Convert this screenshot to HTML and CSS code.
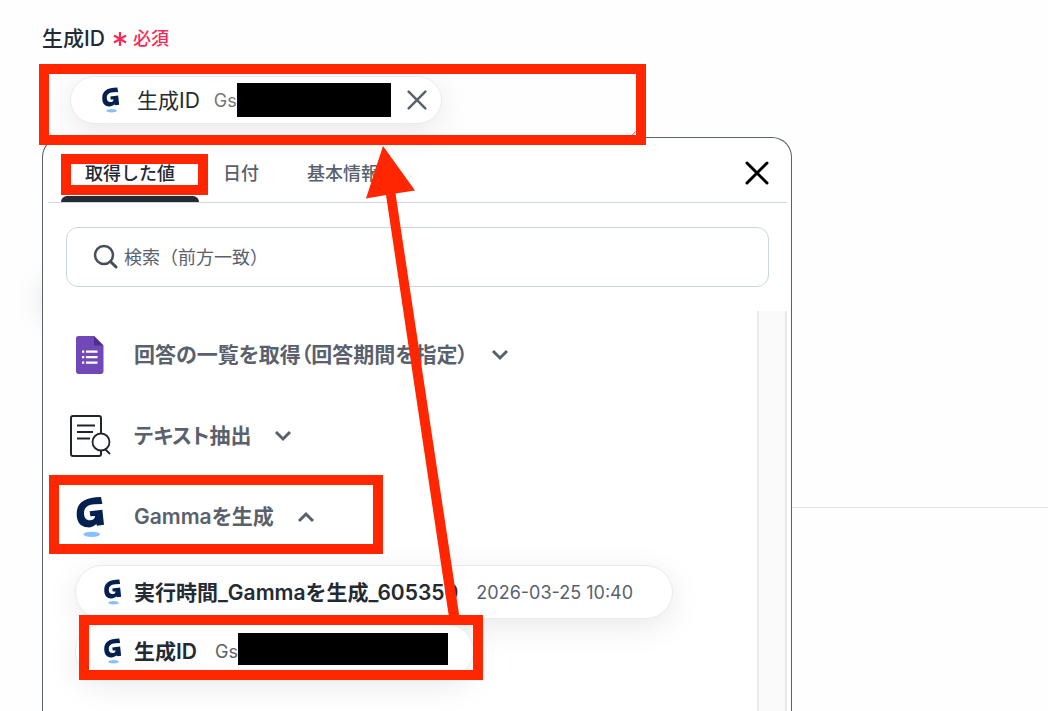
FILE: index.html
```html
<!DOCTYPE html>
<html lang="ja">
<head>
<meta charset="utf-8">
<title>生成ID</title>
<meta name="viewport" content="width=device-width, initial-scale=1">
<link rel="stylesheet" href="styles.css">
</head>
<body>
<svg class="defs" aria-hidden="true">
  <symbol id="gamma" viewBox="15 18 90 126">
    <path fill="#03204f" d="M93 21 97 42 74 43C52 45 42 53 42 70 42 84 49 91 59 91 68 91 75 86 75 78L61 79 59 64 97 59 102 104 81 107 79 102C71 110 61 113 52 112 31 110 20 96 20 72 20 38 42 22 93 21Z"/>
    <ellipse cx="65" cy="133" rx="25" ry="8" fill="#86c0ff"/>
  </symbol>
  <symbol id="cross" viewBox="0 0 24 24">
    <path d="M2 2 22 22M22 2 2 22" fill="none" stroke="currentColor" stroke-linecap="round"/>
  </symbol>
  <symbol id="chevron" viewBox="0 0 18 12">
    <path d="M2 2 9 9 16 2" fill="none" stroke="currentColor" stroke-width="3"/>
  </symbol>
</svg>
<main class="page">
  <div class="editor">
    <div class="label" id="field-label">
      <span class="label-name">生成ID</span>
      <svg class="asterisk" viewBox="0 0 14 14" aria-hidden="true"><path d="M7 0V14M1 3.500 13 10.500M13 3.500 1 10.500" fill="none" stroke="currentColor" stroke-width="2.200"/></svg>
      <span class="required">必須</span>
    </div>
    <div class="field" role="group" aria-labelledby="field-label">
      <div class="token token-field">
        <svg class="token-icon" aria-hidden="true"><use href="#gamma"/></svg>
        <span class="token-name">生成ID</span>
        <span class="token-value">Gs<span class="mask mask-field"></span></span>
        <button class="remove" type="button" aria-label="削除"><svg viewBox="0 0 24 24"><use href="#cross"/></svg></button>
      </div>
      <svg class="grip" viewBox="0 0 12 12" aria-hidden="true"><path d="M0 12 12 0M6 12 12 6" stroke="#9aa0a8"/></svg>
      <div class="mark mark-field"></div>
    </div>
    <section class="panel">
      <header class="panel-head">
        <nav class="tabs">
          <button class="tab tab-active" type="button">取得した値<span class="mark mark-tab"></span></button>
          <button class="tab tab-date" type="button">日付</button>
          <button class="tab tab-basic" type="button">基本情報</button>
        </nav>
        <button class="close" type="button" aria-label="閉じる"><svg viewBox="0 0 24 24"><use href="#cross"/></svg></button>
      </header>
      <label class="search">
        <svg class="search-icon" viewBox="0 0 26 26" aria-hidden="true"><circle cx="12" cy="11" r="9" fill="none" stroke="currentColor" stroke-width="2.500"/><path d="M18.500 17.500 24 23" stroke="currentColor" stroke-width="3" stroke-linecap="round"/></svg>
        <input class="search-input" type="search" aria-label="検索" placeholder="検索（前方一致）">
      </label>
      <div class="results">
        <div class="groups">
          <button class="group" type="button">
            <svg class="group-icon" viewBox="0 0 44 44" aria-hidden="true">
              <path fill="#7248b9" d="M8.500 3H26L35.500 12.500V38Q35.500 41 33 41H10.500Q8 41 8 38V5Q8 3 10.500 3Z"/>
              <path fill="#4f2f8c" d="M26 3 35.500 12.500H26Z"/>
              <path fill="#fff" d="M18 17.500H29.500V19.800H18ZM18 23H29.500V25.300H18ZM18 28.500H29.500V30.800H18ZM14 17.500H16.300V19.800H14ZM14 23H16.300V25.300H14ZM14 28.500H16.300V30.800H14Z"/>
            </svg>
            <span class="group-name">回答の一覧を取得（回答期間を指定）</span>
            <svg class="chevron" aria-hidden="true"><use href="#chevron"/></svg>
          </button>
          <button class="group" type="button">
            <svg class="group-icon" viewBox="0 0 44 44" aria-hidden="true" fill="none" stroke="#1f252d" stroke-width="2">
              <path d="M33 19V4Q33 2 31 2H5Q3 2 3 4V40Q3 42 5 42H31Q33 42 33 40V36"/>
              <path stroke-width="1.800" d="M9 11.500H27M9 18H25M9 24.500H22M37 35 42 40"/>
              <circle cx="33" cy="28" r="8.500" fill="#fff" stroke-width="1.800"/>
            </svg>
            <span class="group-name">テキスト抽出</span>
            <svg class="chevron" aria-hidden="true"><use href="#chevron"/></svg>
          </button>
          <button class="group" type="button" aria-expanded="true">
            <svg class="group-icon group-gamma" aria-hidden="true"><use href="#gamma"/></svg>
            <span class="group-name">Gammaを生成</span>
            <svg class="chevron chevron-up" aria-hidden="true"><use href="#chevron"/></svg>
            <span class="mark mark-group"></span>
          </button>
          <div class="values">
            <button class="token token-row" type="button">
              <svg class="token-icon" aria-hidden="true"><use href="#gamma"/></svg>
              <span class="token-name">実行時間_Gammaを生成_605350</span>
              <span class="token-value">2026-03-25 10:40</span>
            </button>
            <button class="token token-row" type="button">
              <svg class="token-icon" aria-hidden="true"><use href="#gamma"/></svg>
              <span class="token-name">生成ID</span>
              <span class="token-value">Gs<span class="mask mask-row"></span></span>
              <span class="mark mark-value"></span>
            </button>
          </div>
        </div>
        <div class="track"></div>
      </div>
    </section>
    <svg class="arrow" viewBox="0 0 50 480" aria-hidden="true"><path fill="#ff2600" d="M17 0 49 44.500 29.500 47.500 94.500 478H84L20 49 0 52.500Z"/></svg>
  </div>
  <div class="side"><hr class="divider"></div>
</main>
</body>
</html>
```
FILE: styles.css
```css
* { box-sizing: border-box; }

body {
  margin: 0;
  background: #fefefe;
  color: #242a33;
  font-family: Inter, "Noto Sans CJK JP", sans-serif;
  font-size: 18px;
}

button {
  margin: 0;
  padding: 0;
  border: 0;
  background: none;
  color: inherit;
  font: inherit;
}

.defs { position: absolute; width: 0; height: 0; }

.page {
  display: flex;
  min-height: 100vh;
  overflow: hidden;
}

.side { flex: 1; padding-top: 507px; }

.divider {
  margin: 0;
  border: 0;
  border-top: 1px solid #e2e2e2;
}

.editor {
  position: relative;
  display: flex;
  flex-direction: column;
  flex: 0 1 750px;
  margin-left: 42px;
}

.label {
  display: flex;
  align-items: center;
  gap: 6px;
  height: 66px;
  padding-top: 8px;
  font-weight: 500;
}

.label-name { font-size: 21px; }
.asterisk { width: 14px; height: 14px; margin: 4px 0 0 2px; color: #f42b57; }
.required { color: #f42b57; }

.field {
  position: relative;
  z-index: 1;
  display: flex;
  align-items: flex-start;
  width: 80%;
  height: 71px;
  padding: 9px 27px;
  border: 1px solid #b8bdc4;
  border-radius: 16px;
  background: #fefefe;
}

.grip { position: absolute; right: 1px; bottom: -3px; width: 12px; height: 12px; }

.token {
  position: relative;
  display: flex;
  align-items: center;
  border: 1px solid #e8eaf0;
  border-radius: 28px;
  background: #fff;
  box-shadow: 0 8px 32px rgba(0, 0, 0, 0.09);
  white-space: nowrap;
}

.token-field { height: 48px; padding: 0 14px 0 30px; }
.token-row { height: 54px; padding: 0 39px 0 27px; }
.token-icon { width: 19px; height: 26px; }
.token-name { margin-left: 17px; padding-bottom: 2px; font-size: 21px; }
.token-value { display: flex; align-items: center; margin-left: 14px; color: #777; }
.token-row .token-name { margin-left: 12px; font-weight: 600; }
.token-row .token-value { margin-left: 18px; color: #59616d; }
.token-row:last-child { padding-right: 25px; }

.mask { background: #000; }
.mask-field { width: 154px; height: 34px; }
.mask-row { width: 210px; height: 32px; }

.token-row .mask-row { margin-bottom: 4px; }

.remove { width: 20px; height: 20px; margin-left: 16px; color: #59616d; }
.remove svg, .close svg { display: block; width: 100%; height: 100%; stroke-width: 3px; }

.panel {
  position: relative;
  flex: 1;
  display: flex;
  flex-direction: column;
  padding: 0 4px 0 5px;
  border: 1px solid #59616d;
  border-bottom: 0;
  border-radius: 20px 20px 0 0;
  background: #fff;
}

.panel::before {
  content: "";
  position: absolute;
  top: 146px;
  left: 0;
  z-index: -1;
  width: 40px;
  height: 32px;
  border-radius: 20px;
  box-shadow: 0 0 32px rgba(0, 0, 0, 0.16);
}

.panel-head {
  display: flex;
  align-items: center;
  justify-content: space-between;
  height: 65px;
  padding: 0 18px 0 13px;
  border-bottom: 1px solid #ccd5de;
}

.tabs { display: flex; align-items: center; height: 100%; }

.tab {
  position: relative;
  height: 100%;
  padding: 3px 24px 0;
  color: #59616d;
  font-weight: 500;
}

.tab-active { color: #242a33; }

.tab-active::after {
  content: "";
  position: absolute;
  right: 0;
  bottom: 0;
  left: 0;
  height: 6px;
  border-radius: 6px 6px 0 0;
  background: #242a33;
}

.close { width: 24px; height: 24px; margin-top: 6px; color: #000; }

.search {
  display: flex;
  align-items: center;
  gap: 6px;
  height: 60px;
  margin: 24px 18px;
  padding: 0 25px;
  border: 1px solid #ccd5de;
  border-radius: 12px;
}

.search-icon { width: 26px; height: 26px; color: #464e59; }

.search-input {
  flex: 1;
  min-width: 0;
  padding: 0;
  border: 0;
  outline: 0;
  background: none;
  color: inherit;
  font: inherit;
}

.search-input::placeholder { color: #59616d; opacity: 1; }

.results { flex: 1; display: flex; }
.groups { flex: 1; padding: 3px 0 33px 20px; }

.track {
  width: 30px;
  border: solid #e9e9e9;
  border-width: 0 2px;
  background: #fafafa;
}

.group {
  position: relative;
  display: flex;
  align-items: center;
  height: 81px;
  color: #59616d;
  font-size: 21px;
  font-weight: 600;
}

.group-icon { width: 44px; height: 44px; }
.group-gamma { padding: 0 7px; height: 42px; }
.group-name { margin-left: 22px; padding-bottom: 4px; font-feature-settings: "palt"; }
.chevron { width: 18px; height: 12px; margin-left: 23px; }
.chevron-up { transform: rotate(180deg); }

.values {
  display: flex;
  flex-direction: column;
  align-items: flex-start;
  gap: 5px;
  padding: 8px 0 0 7px;
}

.mark {
  position: absolute;
  border: 10px solid #ff2600;
  pointer-events: none;
}

.mark-field { top: -3px; right: -5px; bottom: -9px; left: -4px; }
.mark-tab { top: 16px; right: -9px; bottom: 7px; left: 0; z-index: 1; }
.mark-group { top: -1px; bottom: 3px; left: -19px; width: 334px; }
.mark-value { top: -10px; right: -10px; bottom: -3px; left: 3px; }

.arrow {
  position: absolute;
  top: 146px;
  left: 324px;
  z-index: 2;
  width: 50px;
  height: 480px;
  overflow: visible;
  pointer-events: none;
}
```
